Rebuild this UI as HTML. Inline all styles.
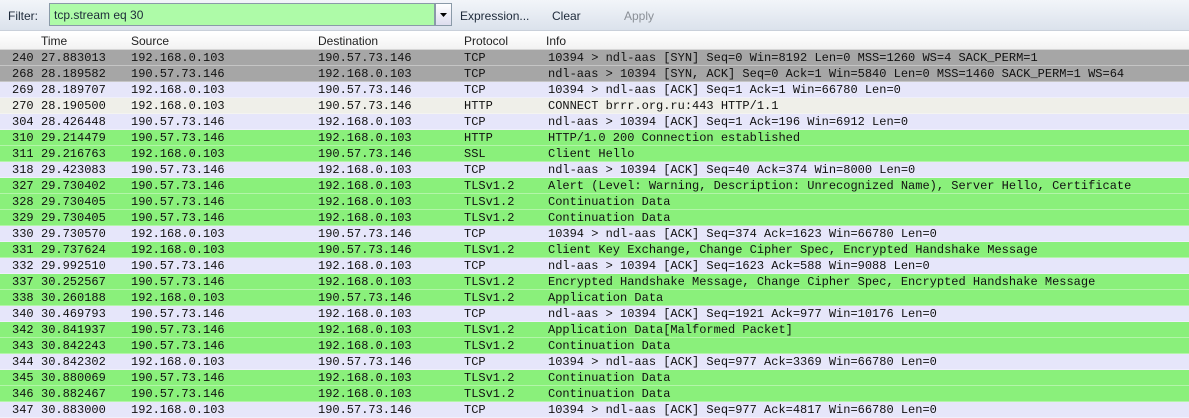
<!DOCTYPE html>
<html><head><style>
body{margin:0;width:1189px;height:406px;overflow:hidden;background:#fff;font-family:"Liberation Sans",sans-serif;}
.tb{position:absolute;left:0;top:0;width:1189px;height:30px;background:linear-gradient(#f2f5f9,#dbe2ec);border-bottom:1px solid #c9d0da;font-size:12px;color:#1e2a3a}
.tb span{position:absolute;top:9px}
.inp{position:absolute;left:49px;top:3px;width:386px;height:23px;background:#aefba8;border:1px solid #8a9aa8;box-sizing:border-box}
.dd{position:absolute;left:435px;top:3px;width:17px;height:23px;background:linear-gradient(#fff,#dde);border:1px solid #8a9aa8;box-sizing:border-box}
.hd{position:absolute;left:0;top:33px;width:1189px;height:16px;background:linear-gradient(#fff,#f2f2f2);border-bottom:1px solid #d5d5d5;font-size:12px;color:#222}
.hd span{position:absolute;top:1px}
.r{position:absolute;left:0;width:1189px;height:16px;font-family:"Liberation Mono",monospace;font-size:12px;line-height:16px;white-space:pre;color:#111;box-sizing:border-box;border-bottom:1px solid rgba(255,255,255,.35)}
.r span{position:absolute;top:0}
.g{background:#8af07b}.l{background:#e6e6fa}.d{background:#a6a6a6}.w{background:#efefe9}
</style></head><body>
<div class="tb"><span style="left:8px">Filter:</span><div class="inp"><span style="left:4px;top:4px">tcp.stream eq 30</span></div><div class="dd"><svg width="15" height="21" style="position:absolute;left:0;top:0"><path d="M4 9h7l-3.5 4z" fill="#000"/></svg></div>
<span style="left:460px">Expression...</span><span style="left:552px">Clear</span><span style="left:624px;color:#8a8f96">Apply</span></div>
<div class="hd"><span style="left:41px">Time</span><span style="left:131px">Source</span><span style="left:318px">Destination</span><span style="left:464px">Protocol</span><span style="left:546px">Info</span></div>
<div id="rows"></div>
<script>
var R=[
["d","240","27.883013","192.168.0.103","190.57.73.146","TCP","10394 > ndl-aas [SYN] Seq=0 Win=8192 Len=0 MSS=1260 WS=4 SACK_PERM=1"],
["d","268","28.189582","190.57.73.146","192.168.0.103","TCP","ndl-aas > 10394 [SYN, ACK] Seq=0 Ack=1 Win=5840 Len=0 MSS=1460 SACK_PERM=1 WS=64"],
["l","269","28.189707","192.168.0.103","190.57.73.146","TCP","10394 > ndl-aas [ACK] Seq=1 Ack=1 Win=66780 Len=0"],
["w","270","28.190500","192.168.0.103","190.57.73.146","HTTP","CONNECT brrr.org.ru:443 HTTP/1.1"],
["l","304","28.426448","190.57.73.146","192.168.0.103","TCP","ndl-aas > 10394 [ACK] Seq=1 Ack=196 Win=6912 Len=0"],
["g","310","29.214479","190.57.73.146","192.168.0.103","HTTP","HTTP/1.0 200 Connection established"],
["g","311","29.216763","192.168.0.103","190.57.73.146","SSL","Client Hello"],
["l","318","29.423083","190.57.73.146","192.168.0.103","TCP","ndl-aas > 10394 [ACK] Seq=40 Ack=374 Win=8000 Len=0"],
["g","327","29.730402","190.57.73.146","192.168.0.103","TLSv1.2","Alert (Level: Warning, Description: Unrecognized Name), Server Hello, Certificate"],
["g","328","29.730405","190.57.73.146","192.168.0.103","TLSv1.2","Continuation Data"],
["g","329","29.730405","190.57.73.146","192.168.0.103","TLSv1.2","Continuation Data"],
["l","330","29.730570","192.168.0.103","190.57.73.146","TCP","10394 > ndl-aas [ACK] Seq=374 Ack=1623 Win=66780 Len=0"],
["g","331","29.737624","192.168.0.103","190.57.73.146","TLSv1.2","Client Key Exchange, Change Cipher Spec, Encrypted Handshake Message"],
["l","332","29.992510","190.57.73.146","192.168.0.103","TCP","ndl-aas > 10394 [ACK] Seq=1623 Ack=588 Win=9088 Len=0"],
["g","337","30.252567","190.57.73.146","192.168.0.103","TLSv1.2","Encrypted Handshake Message, Change Cipher Spec, Encrypted Handshake Message"],
["g","338","30.260188","192.168.0.103","190.57.73.146","TLSv1.2","Application Data"],
["l","340","30.469793","190.57.73.146","192.168.0.103","TCP","ndl-aas > 10394 [ACK] Seq=1921 Ack=977 Win=10176 Len=0"],
["g","342","30.841937","190.57.73.146","192.168.0.103","TLSv1.2","Application Data[Malformed Packet]"],
["g","343","30.842243","190.57.73.146","192.168.0.103","TLSv1.2","Continuation Data"],
["l","344","30.842302","192.168.0.103","190.57.73.146","TCP","10394 > ndl-aas [ACK] Seq=977 Ack=3369 Win=66780 Len=0"],
["g","345","30.880069","190.57.73.146","192.168.0.103","TLSv1.2","Continuation Data"],
["g","346","30.882467","190.57.73.146","192.168.0.103","TLSv1.2","Continuation Data"],
["l","347","30.883000","192.168.0.103","190.57.73.146","TCP","10394 > ndl-aas [ACK] Seq=977 Ack=4817 Win=66780 Len=0"]];
var h="";R.forEach(function(r,i){h+='<div class="r '+r[0]+'" style="top:'+(50+i*16)+'px"><span style="left:12px">'+r[1]+'</span><span style="left:41px">'+r[2]+'</span><span style="left:131px">'+r[3]+'</span><span style="left:318px">'+r[4]+'</span><span style="left:464px">'+r[5]+'</span><span style="left:548px">'+r[6].replace(/</g,"&lt;").replace(/>/g,"&gt;")+'</span></div>'});
document.getElementById("rows").innerHTML=h;
</script>
</body></html>
